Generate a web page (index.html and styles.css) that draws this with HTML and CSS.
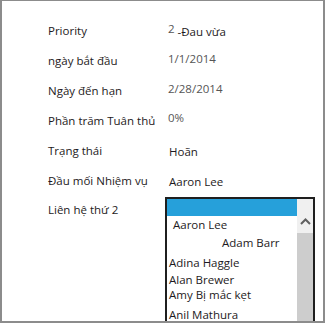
FILE: index.html
```html
<!DOCTYPE html>
<html lang="vi">

<head>
    <meta charset="UTF-8">
    <title>Task details</title>
    <link rel="stylesheet" href="styles.css">
</head>

<body>
    <div class="frame">
        <div class="form">
            <div class="row">
                <div class="label">Priority</div>
                <div class="value"><span class="muted">2</span> <span class="drop">-Đau vừa</span></div>
            </div>
            <div class="row">
                <div class="label">ngày bắt đầu</div>
                <div class="value muted raised">1/1/2014</div>
            </div>
            <div class="row">
                <div class="label">Ngày đến hạn</div>
                <div class="value muted raised">2/28/2014</div>
            </div>
            <div class="row">
                <div class="label">Phần trăm Tuân thủ</div>
                <div class="value muted raised-more">0%</div>
            </div>
            <div class="row">
                <div class="label">Trạng thái</div>
                <div class="value lowered">Hoãn</div>
            </div>
            <div class="row">
                <div class="label">Đầu mối Nhiệm vụ</div>
                <div class="value lowered">Aaron Lee</div>
            </div>
            <div class="row row-list">
                <div class="label">Liên hệ thứ 2</div>
                <div class="listbox">
                    <div class="items">
                        <div class="item selected"></div>
                        <div class="item item-aaron">Aaron Lee</div>
                        <div class="item item-adam">Adam Barr</div>
                        <div class="item item-adina">Adina Haggle</div>
                        <div class="item item-alan">Alan Brewer</div>
                        <div class="item item-amy">Amy Bị mắc kẹt</div>
                        <div class="item item-anil">Anil Mathura</div>
                    </div>
                    <div class="scrollbar">
                        <div class="arrow">
                            <svg width="11" height="7" viewBox="0 0 11 7">
                                <polyline points="1,6 5.5,1.5 10,6" fill="none" stroke="#606060" stroke-width="2"/>
                            </svg>
                        </div>
                        <div class="thumb"></div>
                    </div>
                </div>
            </div>
        </div>
    </div>
</body>

</html>
```

FILE: styles.css
```css
* {
    box-sizing: border-box;
}

body {
    font-family: "Open Sans", "Noto Sans", sans-serif;
    font-size: 11.5px;
    color: #1e1a22;
    margin: 0;
    padding: 0;
    background: #fff;
}

.frame {
    width: 325px;
    height: 323px;
    border-top: 1px solid #8c8c8c;
    border-left: 2px solid #8c8c8c;
    border-right: 2px solid #8c8c8c;
    border-bottom: 2px solid #8c8c8c;
    overflow: hidden;
}

.form {
    padding: 14px 0 0 46px;
}

.row {
    display: flex;
    align-items: center;
    height: 30px;
}

.label {
    width: 117px;
    flex: none;
}

.value {
    padding-left: 3px;
}

.muted {
    color: #555;
}

.drop {
    vertical-align: -3px;
}

.raised {
    padding-bottom: 4px;
}

.raised-more {
    padding-bottom: 6px;
}

.lowered {
    padding-top: 2px;
    padding-left: 4px;
}

.row-list {
    align-items: flex-start;
    height: auto;
}

.row-list .label {
    line-height: 30px;
}

.listbox {
    display: flex;
    width: 150px;
    height: 140px;
    margin-top: 2px;
    border: 2px solid #1f1f1f;
    border-bottom: none;
}

.items {
    flex: 1;
}

.item {
    height: 17px;
    line-height: 17px;
    padding-left: 2px;
    white-space: nowrap;
}

.selected {
    background: #26a0da;
}

.item-aaron {
    padding-left: 6px;
}

.item-adam {
    height: 19px;
    line-height: 19px;
    padding-left: 55px;
}

.item-adina {
    height: 21px;
    line-height: 21px;
}

.item-alan {
    height: 14px;
    line-height: 14px;
}

.item-amy {
    height: 16px;
    line-height: 16px;
}

.item-anil {
    height: 24px;
    line-height: 24px;
}

.scrollbar {
    width: 16px;
    flex: none;
    display: flex;
    flex-direction: column;
    background: #f0f0f0;
}

.arrow {
    height: 34px;
    display: flex;
    align-items: center;
    justify-content: center;
    padding-top: 10px;
}

.arrow svg {
    display: block;
}

.thumb {
    flex: 1;
    background: #cdcdcd;
}
```
